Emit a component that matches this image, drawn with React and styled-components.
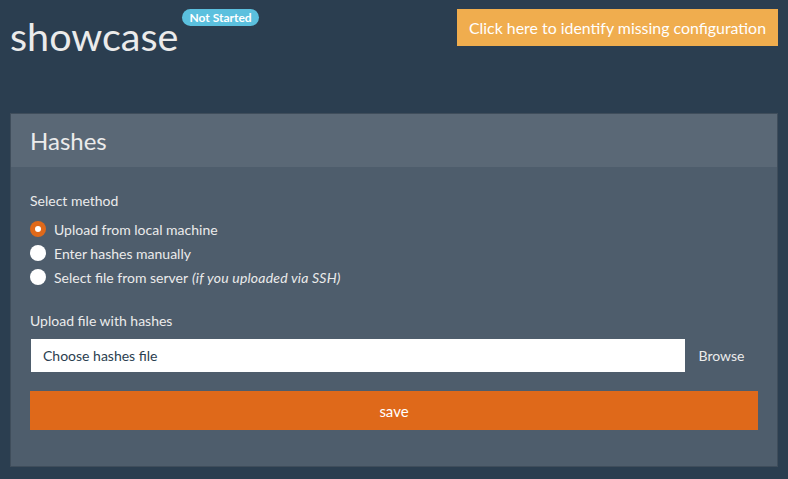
import React, { useState } from 'react';
import styled, { createGlobalStyle } from 'styled-components';

const GlobalStyle = createGlobalStyle`
  html, body {
    margin: 0;
    padding: 0;
    background-color: #2b3e50;
    font-family: Lato, "Open Sans", "Liberation Sans", sans-serif;
    color: #ebebeb;
  }
  * {
    box-sizing: border-box;
  }
`;

const Page = styled.div`
  padding: 0 10px;
  min-height: 479px;
`;

const TopBar = styled.div`
  display: flex;
  justify-content: space-between;
  align-items: flex-start;
  height: 113px;
`;

const TitleWrap = styled.div`
  display: flex;
  align-items: flex-start;
  padding-top: 9px;
`;

const Title = styled.h1`
  margin: 3px 0 0 0;
  font-size: 39.5px;
  font-weight: 400;
  line-height: 48px;
  color: #ebebeb;
`;

const Badge = styled.span`
  background-color: #5bc0de;
  color: #ffffff;
  font-size: 12px;
  font-weight: 700;
  line-height: 17px;
  padding: 0 7px;
  border-radius: 9px;
  margin-left: 4px;
`;

const ConfigButton = styled.button`
  margin-top: 9px;
  background-color: #f0ad4e;
  border: none;
  color: #ffffff;
  font-family: inherit;
  font-size: 15.9px;
  height: 37px;
  padding: 0 12px;
  cursor: pointer;
`;

const Panel = styled.div`
  background-color: #4e5d6c;
  border: 1px solid #3f4d5b;
`;

const PanelHeading = styled.div`
  background-color: #5a6876;
  height: 53px;
  display: flex;
  align-items: center;
  padding: 0 19px;

  h2 {
    margin: 0;
    font-size: 24px;
    font-weight: 400;
    color: #ebebeb;
  }
`;

const PanelBody = styled.div`
  padding: 24px 19px 36px 19px;
`;

const Label = styled.div`
  font-size: 14px;
  line-height: 20px;
  margin-bottom: ${props => props.gap || 8}px;
`;

const RadioList = styled.div`
  display: flex;
  flex-direction: column;
  margin-bottom: 22px;
`;

const RadioRow = styled.label`
  display: flex;
  align-items: center;
  height: 24px;
  font-size: 14px;
  cursor: pointer;

  em {
    margin-left: 4px;
    letter-spacing: 0.2px;
  }
`;

const RadioDot = styled.span`
  width: 16px;
  height: 16px;
  border-radius: 50%;
  background-color: ${props => (props.checked ? '#df691a' : '#ffffff')};
  margin-right: 8px;
  display: flex;
  align-items: center;
  justify-content: center;

  &::after {
    content: '';
    width: 6px;
    height: 6px;
    border-radius: 50%;
    background-color: #ffffff;
    display: ${props => (props.checked ? 'block' : 'none')};
  }
`;

const InputGroup = styled.div`
  display: flex;
  align-items: stretch;
  margin-bottom: 19px;
  padding-left: 1px;
`;

const FileInput = styled.div`
  flex: 1;
  background-color: #ffffff;
  color: #2b3e50;
  height: 33px;
  display: flex;
  align-items: center;
  padding: 0 12px;
  font-size: 14px;
`;

const Addon = styled.span`
  width: 73px;
  display: flex;
  align-items: center;
  justify-content: center;
  font-size: 14px;
`;

const SaveButton = styled.button`
  width: 100%;
  height: 39px;
  background-color: #df691a;
  border: none;
  color: #ffffff;
  font-family: inherit;
  font-size: 15px;
  cursor: pointer;
`;

const methods = [
  { id: 'local', text: 'Upload from local machine' },
  { id: 'manual', text: 'Enter hashes manually' },
  { id: 'server', text: 'Select file from server', note: '(if you uploaded via SSH)' },
];

const App = () => {
  const [method, setMethod] = useState('local');

  return (
    <Page>
      <GlobalStyle />
      <TopBar>
        <TitleWrap>
          <Title>showcase</Title>
          <Badge>Not Started</Badge>
        </TitleWrap>
        <ConfigButton>Click here to identify missing configuration</ConfigButton>
      </TopBar>

      <Panel>
        <PanelHeading>
          <h2>Hashes</h2>
        </PanelHeading>
        <PanelBody>
          <Label gap={6}>Select method</Label>
          <RadioList>
            {methods.map(m => (
              <RadioRow key={m.id} onClick={() => setMethod(m.id)}>
                <RadioDot checked={method === m.id} />
                {m.text}
                {m.note && <em>{m.note}</em>}
              </RadioRow>
            ))}
          </RadioList>
          <Label gap={8}>Upload file with hashes</Label>
          <InputGroup>
            <FileInput>Choose hashes file</FileInput>
            <Addon>Browse</Addon>
          </InputGroup>
          <SaveButton>save</SaveButton>
        </PanelBody>
      </Panel>
    </Page>
  );
};

export default App;
